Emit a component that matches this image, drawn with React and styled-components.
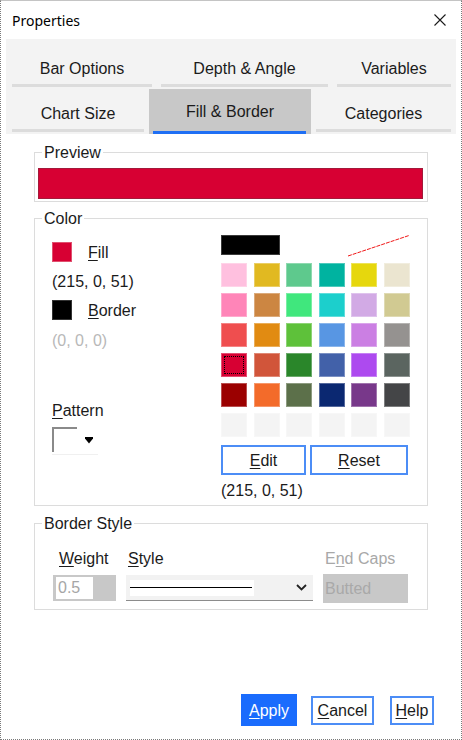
import React from 'react';
import styled, { createGlobalStyle } from 'styled-components';

const GlobalStyle = createGlobalStyle`
    html, body {
        margin: 0;
        padding: 0;
        background: #fff;
    }
    body {
        font-family: "Liberation Sans", Arial, sans-serif;
        color: #1b1b1b;
    }
`;

const Window = styled.div`
    box-sizing: border-box;
    width: 462px;
    height: 740px;
    display: flex;
    flex-direction: column;
    background: #fff;
    border: 1px dotted #7a7a7a;
    border-top: 1px solid #c4c4c4;
`;

const TitleBar = styled.div`
    height: 38px;
    display: flex;
    align-items: center;
    justify-content: space-between;
    padding: 0 15px 0 11px;
    font-family: "Noto Sans", "Open Sans", sans-serif;
    font-size: 14px;
    color: #000;
`;

const TabArea = styled.div`
    margin: 0 5px 0 5px;
    padding: 0 4px 0 6px;
    background: #f3f3f3;
    display: flex;
    flex-direction: column;
`;

const TabRow = styled.div`
    display: flex;
    align-items: flex-start;
    gap: ${(p) => p.$gap}px;
    margin-bottom: ${(p) => p.$mb || 0}px;
`;

const Tab = styled.div`
    box-sizing: border-box;
    width: ${(p) => p.$w}px;
    height: ${(p) => p.$h}px;
    padding-top: ${(p) => p.$pt}px;
    display: flex;
    justify-content: center;
    font-size: 16px;
    line-height: 20px;
    color: #1b1b1b;
    border-bottom: 3px solid #dcdcdc;
`;

const ActiveTab = styled(Tab)`
    border-bottom: none;
    background: linear-gradient(#1f6ff4, #1f6ff4) no-repeat 4px 100% / calc(100% - 9px) 3px,
        #c8c8c8;
`;

const Content = styled.div`
    flex: 1;
    display: flex;
    flex-direction: column;
    padding: 8px 33px 13px 33px;
`;

const Group = styled.fieldset`
    margin: 0 0 ${(p) => p.$mb || 0}px 0;
    padding: 0;
    border: 1px solid #dcdcdc;
    min-width: 0;
`;

const Legend = styled.legend`
    margin-left: 7px;
    padding: 2px 2px 0;
    font-size: 16px;
    line-height: 18px;
    color: #1b1b1b;
`;

const PreviewBody = styled.div`
    padding: 6px 4px 2px 3px;
`;

const PreviewBar = styled.div`
    box-sizing: border-box;
    height: 31px;
    background: #d70033;
    border: 1px solid #a31a3a;
`;

const ColorBody = styled.div`
    display: grid;
    grid-template-columns: 169px 189px;
    padding: 0 0 5px 17px;
`;

const LeftCol = styled.div`
    display: flex;
    flex-direction: column;
    padding-top: 14px;
`;

const RightCol = styled.div`
    display: flex;
    flex-direction: column;
    padding-top: 7px;
`;

const SwatchRow = styled.div`
    display: flex;
    align-items: center;
    gap: 16px;
    height: 20px;
    margin-top: ${(p) => p.$mt || 0}px;
    font-size: 16px;

    & > span {
        padding-top: 2px;
    }
`;

const Swatch = styled.div`
    box-sizing: border-box;
    width: 20px;
    height: 20px;
    background: ${(p) => p.$color};
    border: 1px solid ${(p) => p.$edge};
`;

const Text = styled.div`
    font-size: 16px;
    line-height: 18px;
    padding-top: 2px;
    margin-top: ${(p) => p.$mt || 0}px;
    color: ${(p) => (p.$muted ? '#b8b8b8' : '#1b1b1b')};
`;

const Key = styled.span`
    text-decoration: underline;
    text-underline-offset: 2px;
`;

const PatternPicker = styled.div`
    display: flex;
    align-items: center;
    width: 46px;
    height: 27px;
    margin-top: 7px;
    border-bottom: 1px solid #f0f0f0;
`;

const PatternBox = styled.div`
    box-sizing: border-box;
    width: 25px;
    height: 25px;
    align-self: flex-start;
    border-top: 2px solid #8a8a8a;
    border-left: 2px solid #8a8a8a;
`;

const TopStrip = styled.div`
    display: flex;
    justify-content: space-between;
    align-items: flex-start;
    height: 20px;
    width: 189px;
`;

const BlackBar = styled.div`
    box-sizing: border-box;
    width: 59px;
    height: 20px;
    background: #000;
    border: 1px solid #3a3a3a;
`;

const Palette = styled.div`
    display: grid;
    grid-template-columns: repeat(6, 26px);
    grid-auto-rows: 24px;
    column-gap: 6.5px;
    row-gap: 6px;
    margin-top: 8px;
`;

const Cell = styled.div`
    background: ${(p) => p.$color};
    box-shadow: inset 0 0 0 1px rgba(255, 255, 255, 0.3);
    outline: ${(p) => (p.$selected ? '1px dotted #000' : 'none')};
    outline-offset: -4px;
`;

const ButtonPair = styled.div`
    display: flex;
    gap: 4px;
    margin-top: 8px;
`;

const OutlineButton = styled.div`
    box-sizing: border-box;
    width: ${(p) => p.$w}px;
    height: ${(p) => p.$h || 30}px;
    margin-left: ${(p) => p.$ml || 0}px;
    padding-top: 2px;
    display: flex;
    align-items: center;
    justify-content: center;
    border: 2px solid #4c8df6;
    background: #fff;
    font-size: 16px;
    color: #1b1b1b;
`;

const StyleBody = styled.div`
    display: grid;
    grid-template-columns: 63px 187px 85px;
    grid-template-rows: 20px 29px;
    column-gap: 10px;
    row-gap: 6px;
    padding: 16px 0 5px 18px;
`;

const FieldLabel = styled.div`
    font-size: 16px;
    line-height: 20px;
    padding-left: ${(p) => p.$pl || 2}px;
    color: ${(p) => (p.$disabled ? '#a8a8a8' : '#1b1b1b')};
`;

const WeightBox = styled.div`
    box-sizing: border-box;
    height: 26px;
    padding: 2px 23px 2px 3px;
    background: #c8c8c8;
`;

const WeightInput = styled.div`
    height: 22px;
    background: #fff;
    padding-left: 2px;
    font-size: 16px;
    line-height: 22px;
    color: #a6a6a6;
`;

const StyleSelect = styled.div`
    box-sizing: border-box;
    height: 26px;
    display: flex;
    align-items: center;
    justify-content: space-between;
    padding: 0 6px 0 4px;
    background: #f2f2f2;
    border-bottom: 1px solid #8c8c8c;
`;

const LineSample = styled.div`
    width: 124px;
    height: 16px;
    background: linear-gradient(#000, #000) no-repeat 0 7px / 122px 1px, #fff;
`;

const CapsBox = styled.div`
    height: 29px;
    margin-top: -1px;
    padding-left: 2px;
    background: #c8c8c8;
    font-size: 16px;
    line-height: 30px;
    color: #a9a9a9;
`;

const ButtonRow = styled.div`
    margin-top: auto;
    margin-right: -6px;
    display: flex;
    justify-content: flex-end;
    align-items: center;
`;

const ApplyButton = styled.div`
    box-sizing: border-box;
    width: 56px;
    height: 32px;
    padding-top: 2px;
    display: flex;
    align-items: center;
    justify-content: center;
    background: #1a6cfd;
    color: #fff;
    font-size: 16px;
`;

const palette = [
    ['#ffc0df', '#e1b921', '#5ec98d', '#00b3a0', '#e6d70d', '#ebe5d0'],
    ['#ff85b8', '#cc8642', '#40e77d', '#1ccfcc', '#d2aae5', '#d1ca92'],
    ['#ef4e4f', '#e18b12', '#5ec13a', '#5896e3', '#cb7fe3', '#959290'],
    ['#d70033', '#d1553a', '#2a862a', '#4261a9', '#ad4aef', '#5b6560'],
    ['#9b0000', '#f36b2a', '#5c704a', '#0b2871', '#78388a', '#444547'],
    ['#f4f4f4', '#f4f4f4', '#f4f4f4', '#f4f4f4', '#f4f4f4', '#f4f4f4'],
];

const CloseIcon = () => (
    <svg width='12' height='12' viewBox='0 0 12 12'>
        <path d='M0.5 0.5 L11.5 11.5 M11.5 0.5 L0.5 11.5' stroke='#1a1a1a' strokeWidth='1.1' />
    </svg>
);

const DropArrow = () => (
    <svg width='8' height='7' viewBox='0 0 8 7' style={{ marginLeft: 8 }}>
        <path d='M0 0 H8 V1.5 L4 6.5 L0 1.5 Z' fill='#000' />
    </svg>
);

const Chevron = () => (
    <svg width='11' height='7' viewBox='0 0 11 7'>
        <path d='M1 1 L5.5 5.5 L10 1' fill='none' stroke='#222' strokeWidth='1.8' />
    </svg>
);

const NoneLine = () => (
    <svg width='62' height='22' viewBox='0 0 62 22'>
        <line x1='0' y1='21' x2='61' y2='0.5' stroke='#f01818' strokeWidth='1' strokeDasharray='4 1' />
    </svg>
);

export default function App() {
    return (
        <Window>
            <GlobalStyle />
            <TitleBar>
                <span>Properties</span>
                <CloseIcon />
            </TitleBar>
            <TabArea>
                <TabRow $gap={9} $mb={2}>
                    <Tab $w={140} $h={48} $pt={20}>Bar Options</Tab>
                    <Tab $w={167} $h={48} $pt={20}>Depth &amp; Angle</Tab>
                    <Tab $w={114} $h={48} $pt={20}>Variables</Tab>
                </TabRow>
                <TabRow $gap={5}>
                    <Tab $w={132} $h={43} $pt={15}>Chart Size</Tab>
                    <ActiveTab $w={162} $h={45} $pt={13}>Fill &amp; Border</ActiveTab>
                    <Tab $w={135} $h={43} $pt={15}>Categories</Tab>
                </TabRow>
            </TabArea>
            <Content>
                <Group $mb={6}>
                    <Legend>Preview</Legend>
                    <PreviewBody>
                        <PreviewBar />
                    </PreviewBody>
                </Group>
                <Group $mb={7}>
                    <Legend>Color</Legend>
                    <ColorBody>
                        <LeftCol>
                            <SwatchRow>
                                <Swatch $color='#d70033' $edge='#e0506e' />
                                <span><Key>F</Key>ill</span>
                            </SwatchRow>
                            <Text $mt={9}>(215, 0, 51)</Text>
                            <SwatchRow $mt={9}>
                                <Swatch $color='#000' $edge='#333' />
                                <span><Key>B</Key>order</span>
                            </SwatchRow>
                            <Text $mt={10} $muted>(0, 0, 0)</Text>
                            <Text $mt={50}><Key>P</Key>attern</Text>
                            <PatternPicker>
                                <PatternBox />
                                <DropArrow />
                            </PatternPicker>
                        </LeftCol>
                        <RightCol>
                            <TopStrip>
                                <BlackBar />
                                <NoneLine />
                            </TopStrip>
                            <Palette>
                                {palette.map((row, r) =>
                                    row.map((c, i) => (
                                        <Cell key={`${r}-${i}`} $color={c} $selected={r === 3 && i === 0} />
                                    ))
                                )}
                            </Palette>
                            <ButtonPair>
                                <OutlineButton $w={85}><span><Key>E</Key>dit</span></OutlineButton>
                                <OutlineButton $w={98}><span><Key>R</Key>eset</span></OutlineButton>
                            </ButtonPair>
                            <Text $mt={5}>(215, 0, 51)</Text>
                        </RightCol>
                    </ColorBody>
                </Group>
                <Group>
                    <Legend>Border Style</Legend>
                    <StyleBody>
                        <FieldLabel $pl={6}><Key>W</Key>eight</FieldLabel>
                        <FieldLabel><Key>S</Key>tyle</FieldLabel>
                        <FieldLabel $disabled>E<Key>n</Key>d Caps</FieldLabel>
                        <div>
                            <WeightBox>
                                <WeightInput>0.5</WeightInput>
                            </WeightBox>
                        </div>
                        <div>
                            <StyleSelect>
                                <LineSample />
                                <Chevron />
                            </StyleSelect>
                        </div>
                        <CapsBox>Butted</CapsBox>
                    </StyleBody>
                </Group>
                <ButtonRow>
                    <ApplyButton><span><Key>A</Key>pply</span></ApplyButton>
                    <OutlineButton $w={63} $h={29} $ml={14}>
                        <span><Key>C</Key>ancel</span>
                    </OutlineButton>
                    <OutlineButton $w={44} $h={29} $ml={16}>
                        <span><Key>H</Key>elp</span>
                    </OutlineButton>
                </ButtonRow>
            </Content>
        </Window>
    );
}
